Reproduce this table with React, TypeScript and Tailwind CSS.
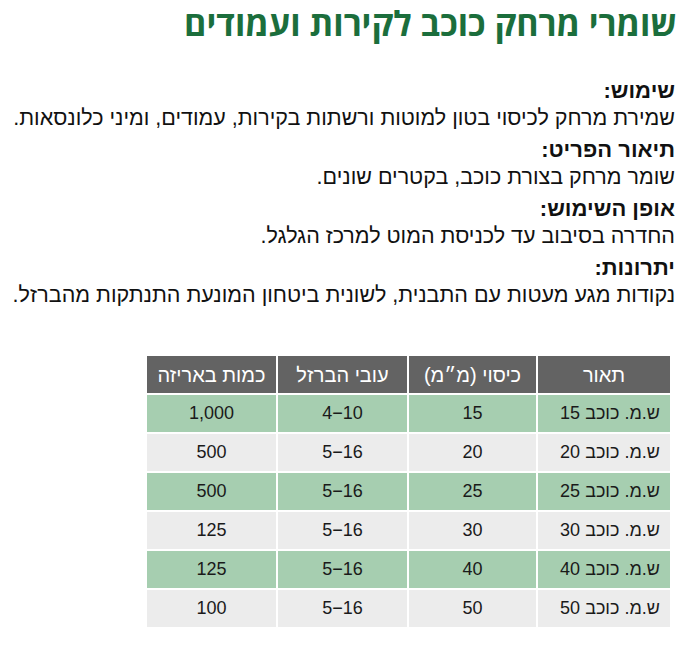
const sections = [
  { title: "שימוש:", body: "שמירת מרחק לכיסוי בטון למוטות ורשתות בקירות, עמודים, ומיני כלונסאות." },
  { title: "תיאור הפריט:", body: "שומר מרחק בצורת כוכב, בקטרים שונים." },
  { title: "אופן השימוש:", body: "החדרה בסיבוב עד לכניסת המוט למרכז הגלגל." },
  { title: "יתרונות:", body: "נקודות מגע מעטות עם התבנית, לשונית ביטחון המונעת התנתקות מהברזל." },
]

const headers = ["תאור", "כיסוי (מ״מ)", "עובי הברזל", "כמות באריזה"]

const rows = [
  ["ש.מ. כוכב 15", "15", "4-10", "1,000"],
  ["ש.מ. כוכב 20", "20", "5-16", "500"],
  ["ש.מ. כוכב 25", "25", "5-16", "500"],
  ["ש.מ. כוכב 30", "30", "5-16", "125"],
  ["ש.מ. כוכב 40", "40", "5-16", "125"],
  ["ש.מ. כוכב 50", "50", "5-16", "100"],
]

export default function App() {
  return (
    <div dir="rtl" className="w-[699px] h-[649px] bg-white font-['Liberation_Sans',Arial,sans-serif] text-[#111]">
      {/* Title */}
      <h1 className="pr-[22px] pt-[1px] text-[34px] leading-[44px] font-bold text-[#1b6e3c] font-['Open_Sans','Liberation_Sans',sans-serif]">
        שומרי מרחק כוכב לקירות ועמודים
      </h1>

      {/* Text sections */}
      <div className="pr-[24px] pt-[32px] flex flex-col gap-[5px]">
        {sections.map((s) => (
          <div key={s.title}>
            <h2 className="text-[22px] leading-[28px] font-bold">{s.title}</h2>
            <p className="text-[21.5px] leading-[26px] whitespace-nowrap">{s.body}</p>
          </div>
        ))}
      </div>

      {/* Table */}
      <div className="pr-[29px] pt-[48px]">
        <div className="w-[523px] grid grid-cols-[132px_127px_129px_129px] gap-[2px] font-['Liberation_Sans_Narrow','Liberation_Sans',sans-serif]">
          {headers.map((h) => (
            <div key={h} className="h-[37px] bg-[#636363] text-white text-[20px] flex items-center justify-center">
              {h}
            </div>
          ))}
          {rows.map((r, i) =>
            r.map((c, j) => (
              <div
                key={`${i}-${j}`}
                className={`h-[37px] text-[18px] text-[#1a1a1a] flex items-center ${j === 0 ? "justify-start pr-[10px]" : "justify-center"} ${
                  i % 2 === 0 ? "bg-[#a6ceb0]" : "bg-[#ececec]"
                }`}
              >
                {j === 0 ? <span dir="rtl">{c}</span> : <span dir="ltr">{c.replace("-", "−")}</span>}
              </div>
            ))
          )}
        </div>
      </div>
    </div>
  )
}
